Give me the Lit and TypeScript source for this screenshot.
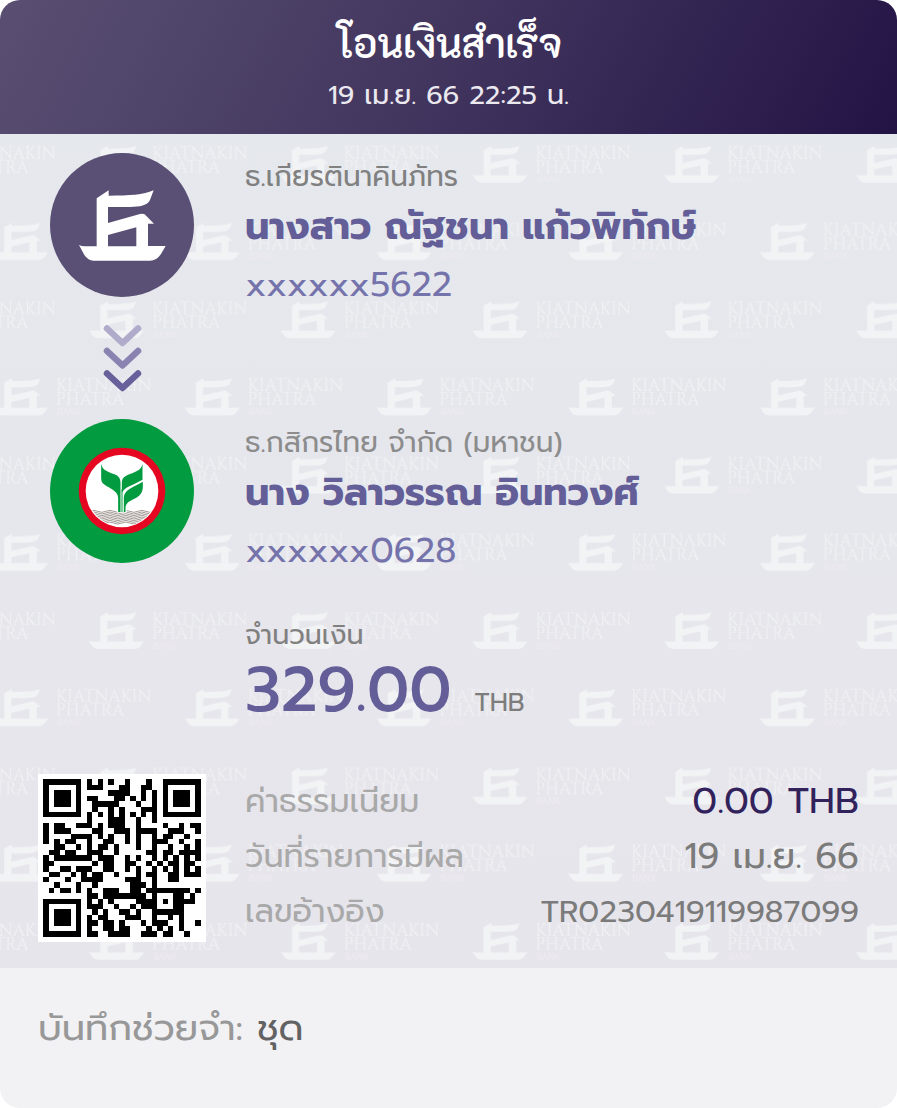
import { LitElement, html, css, svg } from 'lit';
import { customElement } from 'lit/decorators.js';

const MARK =
  'M170 160L206 136V152C270 152 310 150 341 136L330 165C322 182 300 185 270 186H204V234L300 207Q308 205 314 208L342 236H324V303H377L363 327Q350 347 330 347H160Q145 347 133 330L117 300Q125 304 135 304H170ZM204 270L289 247V304H204Z';

const QR_ROWS = [
  'XXXXXXX.X.X.X..X...X..XXXXXXX',
  'X.....X.XXX...XX..XX..X.....X',
  'X.XXX.X.....XXXX..X.X.X.XXX.X',
  'X.XXX.X.XX...XX.X.X.X.X.XXX.X',
  'X.XXX.X..XXXXX...X..X.X.XXX.X',
  'X.....X..X..X.X...XXX.X.....X',
  'XXXXXXX.X.X.X.X.X.X.X.XXXXXXX',
  '........X...XXX..X..X........',
  'X.XX..XXX.X.XXX..X....X..X.XX',
  'X.XXX....XX..XXX.XXXX..XXX..X',
  'X....XXXX.X.X..X.X..X.XX..X..',
  'X.X.XX..X..XX..X.X..XXX..X..X',
  '..XX..X.X.XX.X...X..X..X..X.X',
  '.XX.XX..XXX..X.....XX.XX.XXXX',
  'X.XXXXXXX.XXX..X.X..X.X.X.X.X',
  'XX.......X.XX..XX..X.X.XX.XX.X',
  'X..XX.XXX..XX..X.X..X.X.X.X.X',
  '.XX..X.X.XX..X...X.XX..XX.XXX',
  'X...X..XXXX....XXX..X..XX....',
  '..X...X..X......XXX.X........',
  '.X.XX.X.X..XXX..XX.XXXXXXXX.X',
  '........XX.XXXXXXXX.X...XX.X.',
  'XXXXXXX.X.X.X....XXXX.X.XXXX.',
  'X.....X.XXX..X..X.XXX...XX...',
  'X.XXX.X..X.X..XX.X..XXXXXX...',
  'X.XXX.X.X.XX...XXX..X..X.X...',
  'X.XXX.X.XX.XX.X...X.XXX..X..X',
  'X.....X.X..XX.XX...X.X.X.X...',
  'XXXXXXX.XX..XXXX..XXX.XX..X..',
];

const QR_PATH = QR_ROWS.map((row, y) =>
  Array.from(row.slice(0, 29).matchAll(/X+/g), (m) => `M${m.index} ${y}h${m[0].length}v1h-${m[0].length}z`).join(''),
).join('');

const WAVES = Array.from({ length: 8 }, (_, i) => {
  const y = 606 + i * 5;
  return `M150 ${y}q12 -6 24 0t24 0 24 0 24 0 24 0 24 0 24 0 24 0`;
}).join('');

@customElement('kk-watermark')
class KkWatermark extends LitElement {
  static styles = css`
    :host { display: block; overflow: hidden; }
    svg { display: block; width: 100%; height: 100%; }
    .mark { fill: #f2f3f5; }
    .name { font: 400 17px Cinzel, 'Liberation Serif', serif; fill: #f1f2f4; }
    .bank { font: 400 9px 'Open Sans', sans-serif; fill: #efebf1; }
  `;

  private logo(x: number, y: number) {
    return svg`<g transform="translate(${x} ${y})">
      <path class="mark" fill-rule="evenodd" transform="scale(.2115 .175) translate(-117 -136)" d=${MARK}></path>
      <text class="name" x="63" y="13">KIATNAKIN</text>
      <text class="name" x="63" y="27">PHATRA</text>
      <text class="bank" x="64" y="37">BANK</text>
    </g>`;
  }

  render() {
    return html`<svg aria-hidden="true">
      <defs>
        <pattern id="tile" width="191.7" height="155.4" patternUnits="userSpaceOnUse">
          ${this.logo(89, 12)} ${this.logo(-102.7, 12)} ${this.logo(-7, 89)} ${this.logo(184.7, 89)}
        </pattern>
      </defs>
      <rect width="100%" height="100%" fill="url(#tile)"></rect>
    </svg>`;
  }
}

@customElement('app-root')
class AppRoot extends LitElement {
  static styles = css`
    :host {
      display: block;
      min-height: 100vh;
      background: #fff;
      font-family: Prompt, 'Noto Sans Thai', 'Noto Sans', sans-serif;
    }
    * { box-sizing: border-box; }
    h1, h2, p, dl, dd, dt { margin: 0; font-weight: 400; }
    .slip {
      display: flex;
      flex-direction: column;
      min-height: 100vh;
      border-radius: 20px;
      overflow: hidden;
      background: #f2f2f5;
    }
    .head {
      padding: 14px 16px 19px;
      text-align: center;
      color: #fff;
      background: linear-gradient(118deg, #5a4f72 0%, #42365f 48%, #231345 100%);
      display: flex;
      flex-direction: column;
      gap: 5px;
    }
    .title { font-family: K2D, Prompt, 'Noto Sans Thai', sans-serif; font-size: 40px; line-height: 56px; font-weight: 600; }
    .when { font-size: 27px; line-height: 40px; color: #ebe9ef; }
    .body {
      position: relative;
      padding: 19px 38px 26px;
      background: linear-gradient(#e5e8ed, #e6e6ec 60%, #e7e5ec);
    }
    .backdrop { position: absolute; inset: 0; }
    .content { position: relative; }
    .row { display: grid; grid-template-columns: 168px 1fr; column-gap: 39px; }
    .side { display: flex; flex-direction: column; align-items: center; }
    .logo { display: block; width: 144px; height: 144px; }
    .arrows { display: block; width: 40px; height: 68px; margin: 27px 0; }
    .party { padding-top: 4px; }
    .bank { font-size: 28px; line-height: 40px; color: #808080; }
    .bank.to { color: #8c8c8c; }
    .name { font-size: 38px; line-height: 60px; font-weight: 700; color: #635e98; }
    .account { font-size: 35px; line-height: 56px; color: #7573ab; }
    .amount { grid-column: 2; padding-top: 36px; }
    .caption { font-size: 27px; line-height: 40px; color: #808080; }
    .sum { font-size: 62px; line-height: 70px; color: #635e98; }
    .sum strong { font-weight: 500; }
    .unit { font-size: 26px; line-height: 1; color: #7d7d7d; }
    .details { margin-top: 49px; }
    .qr { display: block; width: 168px; height: 168px; background: #fff; }
    .line { display: flex; justify-content: space-between; align-items: center; line-height: 55px; }
    .line dt { font-size: 32px; color: #a9a9a9; }
    .line dd { font-size: 36px; color: #7b7b7b; }
    .line .fee { font-size: 37px; color: #32225c; }
    .line .ref { font-size: 31px; }
    .memo {
      display: flex;
      gap: 14px;
      padding: 30px 38px 50px;
      font-size: 37px;
      line-height: 60px;
      color: #989898;
    }
    .memo dd { color: #626262; }
  `;

  private kkLogo() {
    return html`<svg class="logo" viewBox="0 0 144 144" role="img" aria-label="Kiatnakin Phatra">
      <circle cx="72" cy="72" r="72" fill="#5a4f74"></circle>
      <path fill="#fff" fill-rule="evenodd" transform="translate(-10 -8) scale(.3333)" d=${MARK}></path>
    </svg>`;
  }

  private kbankLogo() {
    return html`<svg class="logo" viewBox="30.5 329 432 432" role="img" aria-label="Kasikornbank">
      <defs><clipPath id="disc"><circle cx="246.5" cy="545" r="106"></circle></clipPath></defs>
      <circle cx="246.5" cy="545" r="216" fill="#039b3f"></circle>
      <circle cx="246.5" cy="545" r="130" fill="#e50722"></circle>
      <circle cx="246.5" cy="545" r="109" fill="#fff"></circle>
      <path clip-path="url(#disc)" d=${WAVES} fill="none" stroke="#9c918c" stroke-width="2.8"></path>
      <path d="M232 590H261V610H232Z" fill="#fff"></path>
      <g fill="#039b3f">
        <path d="M184 463C188 484 204 486 224 495C238 501 242 508 242 522V608H235V568C235 553 228 547 214 538C194 526 184 524 184 506Z"></path>
        <path d="M308 463C304 484 288 486 268 495C250 503 246 508 246 524V550C256 532 276 529 308 511Z"></path>
        <path d="M309 517V530C309 552 300 560 282 569C266 577 257 582 257 597V608H252V566C252 544 270 538 309 517Z"></path>
        <path d="M245 540H248V608H245Z"></path>
      </g>
    </svg>`;
  }

  private arrows() {
    return html`<svg class="arrows" viewBox="0 0 40 68" aria-hidden="true">
      <g fill="none" stroke-width="6.5" stroke-linecap="round" stroke-linejoin="round">
        <path d="M5 4.500L20.500 19L36 4.500" stroke="#b0abcb"></path>
        <path d="M5 27L20.500 41.500L36 27" stroke="#8a82b1"></path>
        <path d="M5 49.500L20.500 64L36 49.500" stroke="#68609a"></path>
      </g>
    </svg>`;
  }

  render() {
    return html`<main class="slip">
      <header class="head">
        <h1 class="title">โอนเงินสำเร็จ</h1>
        <p class="when">19 เม.ย. 66 22:25 น.</p>
      </header>
      <section class="body">
        <kk-watermark class="backdrop"></kk-watermark>
        <div class="content">
          <div class="row">
            <div class="side">${this.kkLogo()} ${this.arrows()}</div>
            <div class="party">
              <p class="bank">ธ.เกียรตินาคินภัทร</p>
              <h2 class="name">นางสาว ณัฐชนา แก้วพิทักษ์</h2>
              <p class="account">xxxxxx5622</p>
            </div>
          </div>
          <div class="row">
            <div class="side">${this.kbankLogo()}</div>
            <div class="party">
              <p class="bank to">ธ.กสิกรไทย จำกัด (มหาชน)</p>
              <h2 class="name">นาง วิลาวรรณ อินทวงศ์</h2>
              <p class="account">xxxxxx0628</p>
            </div>
            <div class="amount">
              <p class="caption">จำนวนเงิน</p>
              <p class="sum"><strong>329.00</strong> <span class="unit">THB</span></p>
            </div>
          </div>
          <div class="row details">
            <svg class="qr" viewBox="-1 -1 31 31" shape-rendering="crispEdges" role="img" aria-label="QR">
              <path d=${QR_PATH}></path>
            </svg>
            <dl>
              <div class="line"><dt>ค่าธรรมเนียม</dt><dd class="fee">0.00 THB</dd></div>
              <div class="line"><dt>วันที่รายการมีผล</dt><dd>19 เม.ย. 66</dd></div>
              <div class="line"><dt>เลขอ้างอิง</dt><dd class="ref">TR0230419119987099</dd></div>
            </dl>
          </div>
        </div>
      </section>
      <dl class="memo"><dt>บันทึกช่วยจำ:</dt><dd>ชุด</dd></dl>
    </main>`;
  }
}
